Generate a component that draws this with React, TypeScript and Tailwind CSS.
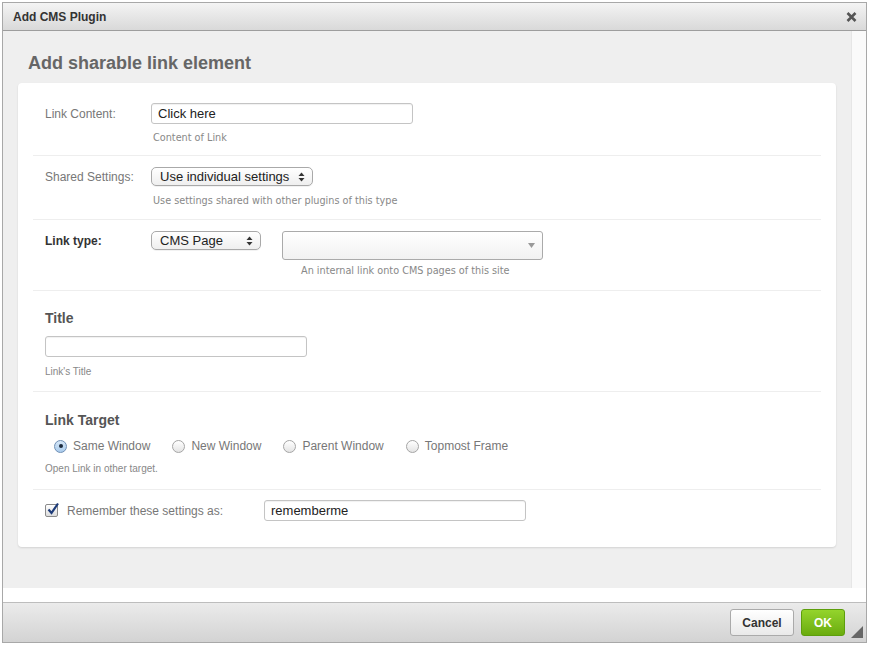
import React from 'react';

const sans = "font-['Liberation_Sans',Arial,sans-serif]";
const help = "font-['DejaVu_Sans',sans-serif] text-[9.7px] leading-[14px] text-[#888]";

function Updown() {
  return (
    <svg width="7" height="10" viewBox="0 0 7 10" className="shrink-0">
      <path d="M3.5 0.5 L6.5 4 L0.5 4 Z" fill="#333" />
      <path d="M3.5 9.5 L6.5 6 L0.5 6 Z" fill="#333" />
    </svg>
  );
}

function Select({ label, width }: { label: string; width: string }) {
  return (
    <div
      className={`${width} h-[19px] flex items-center justify-between pl-[8px] pr-[7px] rounded-[5px] border border-[#a9a9a9] bg-gradient-to-b from-white to-[#efefef] shadow-[0_1px_0_rgba(0,0,0,0.05)] text-[13px] text-[#222]`}
    >
      <span>{label}</span>
      <Updown />
    </div>
  );
}

function TextInput({ value, width }: { value?: string; width: string }) {
  return (
    <div
      className={`${width} h-[21px] flex items-center px-[6px] rounded-[3px] border border-[#c4c4c4] bg-white text-[13px] text-[#222] shadow-[inset_0_1px_1px_rgba(0,0,0,0.06)]`}
    >
      {value}
    </div>
  );
}

function Radio({ label, checked }: { label: string; checked?: boolean }) {
  return (
    <div className="flex items-center gap-[6px]">
      <span
        className={`w-[13px] h-[13px] rounded-full border flex items-center justify-center ${
          checked
            ? 'border-[#6f8fb5] bg-gradient-to-b from-[#d7e8f8] to-[#a9cbec]'
            : 'border-[#a5a5a5] bg-gradient-to-b from-white to-[#e4e4e4]'
        }`}
      >
        {checked && <span className="w-[4px] h-[4px] rounded-full bg-[#1c2b3e]" />}
      </span>
      <span className="text-[12px] text-[#777]">{label}</span>
    </div>
  );
}

export default function App() {
  return (
    <div className={`w-[869px] h-[645px] bg-white pt-[2px] pl-[2px] ${sans}`}>
      <div className="w-[865px] h-[641px] border border-[#a8a8a8] flex flex-col">
        {/* title bar */}
        <div className="h-[28px] shrink-0 flex items-center justify-between pl-[10px] pr-[9px] bg-gradient-to-b from-[#f4f4f4] to-[#d9d9d9] border-b border-[#9d9d9d]">
          <span className="text-[12px] font-bold text-[#333]">Add CMS Plugin</span>
          <svg width="11" height="10" viewBox="0 0 11 10">
            <path d="M1.5 1 L9.5 9 M9.5 1 L1.5 9" stroke="#555" strokeWidth="2.6" strokeLinecap="butt" />
          </svg>
        </div>

        {/* body */}
        <div className="h-[557px] shrink-0 flex">
          <div className="flex-1 bg-[#efefef] px-[15px]">
            <h1 className="pt-[21px] pl-[10px] text-[18px] leading-[22px] font-bold text-[#666] mb-[9px]">
              Add sharable link element
            </h1>

            <div className="bg-white rounded-[4px] shadow-[0_1px_2px_rgba(0,0,0,0.12)] px-[15px]">
              {/* Link content */}
              <div className="pt-[20px] pb-[10px] pl-[12px] border-b border-[#eee]">
                <div className="flex items-center h-[21px]">
                  <span className="w-[106px] text-[12px] text-[#777]">Link Content:</span>
                  <TextInput value="Click here" width="w-[262px]" />
                </div>
                <div className={`mt-[7px] ml-[108px] ${help}`}>Content of Link</div>
              </div>

              {/* Shared settings */}
              <div className="pt-[11px] pb-[11px] pl-[12px] border-b border-[#eee]">
                <div className="flex items-center h-[19px]">
                  <span className="w-[106px] text-[12px] text-[#777]">Shared Settings:</span>
                  <Select label="Use individual settings" width="w-[162px]" />
                </div>
                <div className={`mt-[8px] ml-[108px] ${help}`}>
                  Use settings shared with other plugins of this type
                </div>
              </div>

              {/* Link type */}
              <div className="pt-[11px] pb-[12px] pl-[12px] border-b border-[#eee] flex items-start">
                <span className="w-[106px] h-[19px] flex items-center text-[12px] font-bold text-[#333]">
                  Link type:
                </span>
                <Select label="CMS Page" width="w-[110px]" />
                <div className="ml-[21px]">
                  <div className="w-[261px] h-[29px] flex rounded-[3px] border border-[#aaa] bg-gradient-to-b from-white to-[#f1f1f1]">
                    <div className="flex-1" />
                    <div className="w-[22px] flex items-center justify-center">
                      <svg width="7" height="5" viewBox="0 0 7 5">
                        <path d="M0 0 L7 0 L3.5 5 Z" fill="#999" />
                      </svg>
                    </div>
                  </div>
                  <div className={`mt-[4px] pl-[19px] ${help}`}>
                    An internal link onto CMS pages of this site
                  </div>
                </div>
              </div>

              {/* Title */}
              <div className="pt-[18px] pb-[12px] pl-[12px] border-b border-[#eee]">
                <h2 className="text-[14px] leading-[18px] font-bold text-[#555] mb-[9px]">Title</h2>
                <TextInput width="w-[262px]" />
                <div className="mt-[8px] text-[10px] leading-[14px] text-[#888]">Link's Title</div>
              </div>

              {/* Link target */}
              <div className="pt-[19px] pb-[13px] pl-[12px] border-b border-[#eee]">
                <h2 className="text-[14px] leading-[18px] font-bold text-[#555] mb-[8px]">Link Target</h2>
                <div className="flex items-center h-[18px] pl-[9px] gap-[22px]">
                  <Radio label="Same Window" checked />
                  <Radio label="New Window" />
                  <Radio label="Parent Window" />
                  <Radio label="Topmost Frame" />
                </div>
                <div className="mt-[7px] text-[10px] leading-[14px] text-[#888]">
                  Open Link in other target.
                </div>
              </div>

              {/* Remember */}
              <div className="pt-[10px] pb-[26px] pl-[12px] flex items-center">
                <span className="w-[13px] h-[13px] relative rounded-[2px] border border-[#8a8a8a] bg-gradient-to-b from-white to-[#dcdcdc]">
                  <svg width="14" height="14" viewBox="0 0 14 14" className="absolute -top-[3px] left-[0px]">
                    <path d="M2.5 7.5 L5.5 11 L12 1.5" stroke="#1d3b78" strokeWidth="2.2" fill="none" />
                  </svg>
                </span>
                <span className="ml-[9px] w-[197px] text-[12px] text-[#777]">
                  Remember these settings as:
                </span>
                <TextInput value="rememberme" width="w-[262px]" />
              </div>
            </div>
          </div>
          {/* scrollbar */}
          <div className="w-[15px] bg-[#fafafa] border-l border-[#e6e6e6]" />
        </div>

        <div className="h-[15px] shrink-0 bg-white border-b border-[#bdbdbd]" />

        {/* footer */}
        <div className="flex-1 relative flex items-center justify-end pr-[21px] gap-[7px] bg-gradient-to-b from-[#ebebeb] to-[#d3d3d3]">
          <button className="w-[64px] h-[27px] rounded-[3px] border border-[#aaa] bg-gradient-to-b from-white to-[#e9e9e9] text-[12px] font-bold text-[#333]">
            Cancel
          </button>
          <button className="w-[44px] h-[27px] rounded-[3px] border border-[#5d9e0c] bg-gradient-to-b from-[#94d42c] to-[#6aac0d] text-[12px] font-bold text-white">
            OK
          </button>
          <svg width="12" height="12" viewBox="0 0 12 12" className="absolute right-[3px] bottom-[4px]">
            <path d="M12 0 L12 12 L0 12 Z" fill="#666" />
          </svg>
        </div>
      </div>
    </div>
  );
}
